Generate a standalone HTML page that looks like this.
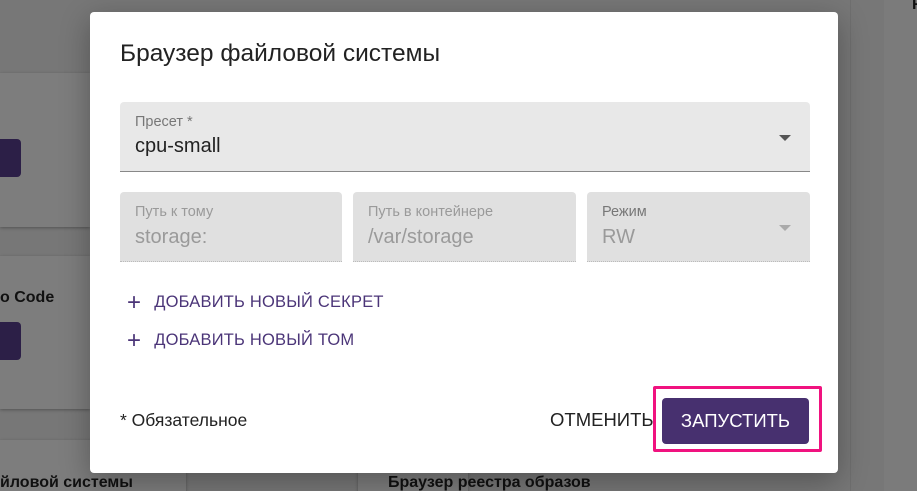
<html><head><style>
html,body{margin:0;width:917px;height:491px;overflow:hidden}
body{background:#777;position:relative;font-family:"Liberation Sans",sans-serif}
.a{position:absolute}
.card{position:absolute;background:#7d7d7d;box-shadow:0 1px 3px rgba(0,0,0,.3)}
.f{position:absolute;background:#e0e0e0;border-radius:4px 4px 0 0;border-bottom:1px dotted #bbb}
.lbl{position:absolute;left:15px;top:12px;font-size:14.5px;color:#9a9a9a}
.val{position:absolute;left:15px;top:34px;font-size:20px;color:#9a9a9a}
.tri{position:absolute;width:0;height:0;border-left:6px solid transparent;border-right:6px solid transparent;border-top:6px solid #aaa}
.add{position:absolute;left:127px;font-size:16.5px;color:#4b3578;letter-spacing:.2px}
.add b{font-weight:normal;font-size:24px;position:relative;top:3px;margin-right:13px}
</style></head><body>
<div class="card" style="left:0;top:73px;width:90px;height:154px"></div>
<div class="card" style="left:0;top:256px;width:90px;height:153px"></div>
<div class="card" style="left:0;top:440px;width:186px;height:60px"></div>
<div class="card" style="left:358px;top:440px;width:110px;height:60px"></div>
<div class="a" style="left:0;top:139px;width:21px;height:38px;background:#2c1f47;border-radius:0 4px 4px 0"></div>
<div class="a" style="left:0;top:322px;width:21px;height:38px;background:#2c1f47;border-radius:0 4px 4px 0"></div>
<div class="a" style="left:0;top:289px;font-size:16px;font-weight:bold;color:#111">o Code</div>
<div class="a" style="left:0;top:474px;font-size:16px;font-weight:bold;color:#111">йловой системы</div>
<div class="a" style="left:388px;top:474px;font-size:16px;font-weight:bold;color:#111">Браузер реестра образов</div>
<div class="a" style="left:850px;top:0;width:1px;height:491px;background:#6f6f6f"></div>
<div class="a" style="left:884px;top:0;width:33px;height:491px;background:#7b7b7b"></div>
<div class="a" style="left:912px;top:-4px;font-size:16px;font-weight:bold;color:#111">F</div>
<div class="a" style="left:90px;top:12px;width:748px;height:461px;background:#fff;border-radius:4px;box-shadow:0 8px 30px rgba(0,0,0,.3)">
<div class="a" style="left:30px;top:28px;font-size:24.5px;color:#222">Браузер файловой системы</div>
<div class="f" style="left:30px;top:90px;width:690px;height:69px;background:#e8e8e8;border-bottom:1px solid #888">
<div class="lbl" style="color:#777">Пресет *</div><div class="val" style="color:#222;top:33px">cpu-small</div>
<div class="tri" style="left:659px;top:33px;border-top-color:#555"></div></div>
<div class="f" style="left:30px;top:180px;width:222px;height:69px"><div class="lbl">Путь к тому</div><div class="val">storage:</div></div>
<div class="f" style="left:263px;top:180px;width:223px;height:69px"><div class="lbl">Путь в контейнере</div><div class="val">/var/storage</div></div>
<div class="f" style="left:497px;top:180px;width:223px;height:69px"><div class="lbl" style="color:#777">Режим</div><div class="val">RW</div><div class="tri" style="left:192px;top:33px"></div></div>
</div>
<div class="add" style="top:286px"><b>+</b>ДОБАВИТЬ НОВЫЙ СЕКРЕТ</div>
<div class="add" style="top:324px"><b>+</b>ДОБАВИТЬ НОВЫЙ ТОМ</div>
<div class="a" style="left:120px;top:410px;font-size:17.5px;color:#222">* Обязательное</div>
<div class="a" style="left:550px;top:409px;font-size:18.5px;color:#222">ОТМЕНИТЬ</div>
<div class="a" style="left:653px;top:386px;width:169px;height:66px;border:3px solid #f0127f;border-radius:2px;box-sizing:border-box"></div>
<div class="a" style="left:662px;top:398px;width:147px;height:46px;background:#47306f;border-radius:4px;color:#fff;font-size:18.5px;text-align:center;line-height:46px">ЗАПУСТИТЬ</div>
</body></html>
